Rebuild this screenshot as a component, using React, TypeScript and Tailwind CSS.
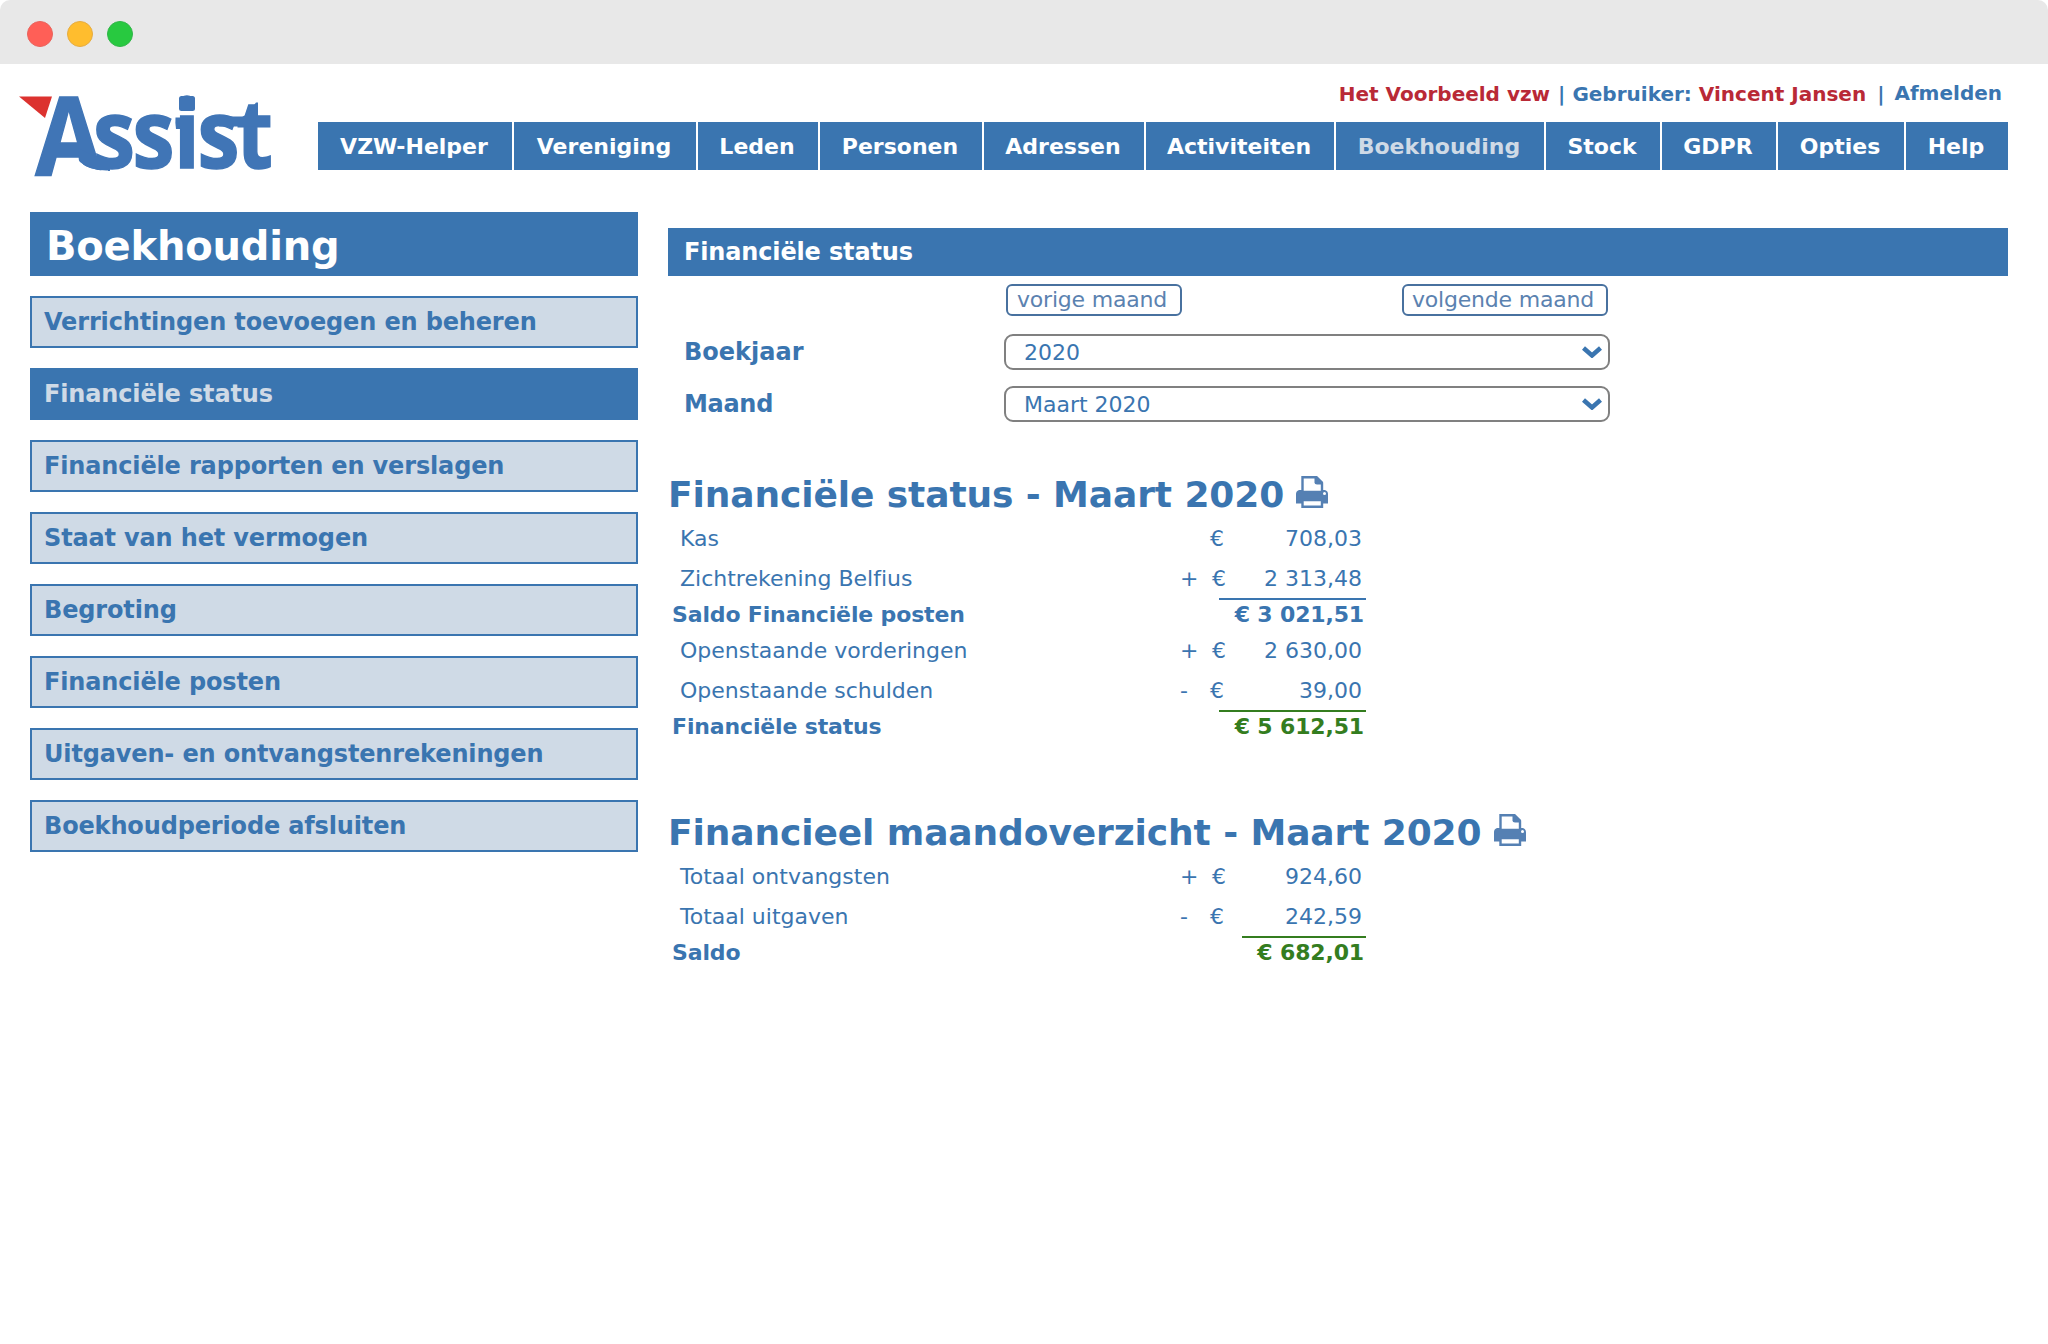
import React from "react";

type MenuItem = { label: string; width: string; active?: boolean };

const menu: MenuItem[] = [
  { label: "VZW-Helper", width: "w-[194px]" },
  { label: "Vereniging", width: "w-[182px]" },
  { label: "Leden", width: "w-[120px]" },
  { label: "Personen", width: "w-[162px]" },
  { label: "Adressen", width: "w-[160px]" },
  { label: "Activiteiten", width: "w-[188px]" },
  { label: "Boekhouding", width: "w-[208px]", active: true },
  { label: "Stock", width: "w-[114px]" },
  { label: "GDPR", width: "w-[114px]" },
  { label: "Opties", width: "w-[126px]" },
  { label: "Help", width: "w-[102px]" },
];

const sideMenu = [
  "Verrichtingen toevoegen en beheren",
  "Financiële status",
  "Financiële rapporten en verslagen",
  "Staat van het vermogen",
  "Begroting",
  "Financiële posten",
  "Uitgaven- en ontvangstenrekeningen",
  "Boekhoudperiode afsluiten",
];

const Logo = () => (
  <svg className="block h-[84px] w-[256px] overflow-visible" viewBox="19 95 256 84" role="img" aria-label="Assist">
    <defs>
      <clipPath id="logo-clip">
        <path d="M19 50H290V200H108V170.500Q90 171 80 162L77 158H62V200H19Z" />
      </clipPath>
    </defs>
    <path d="M19 96.5H52L45 118Z" fill="#dc322f" />
    <g fill="#4075b6" clipPath="url(#logo-clip)">
      <text
        transform="scale(.89 1)"
        fontFamily="'Open Sans'"
        fontWeight={700}
        fontSize="95"
        stroke="#4075b6"
        strokeWidth="1.5"
      >
        <tspan x="39.500" y="176" fontSize="109">A</tspan>
        <tspan x="104.500 149 195.500 221.800 265.500" y="168.500">ssist</tspan>
      </text>
      {/* the leg of the A runs on into the first s */}
      <path d="M78 148L94 156Q102 159 110 159V171Q90 172 79 163Z" />
      {/* square dot and serif of the i, bar joining s and t */}
      <rect x="179" y="96" width="16" height="15" rx="2.500" />
      <path d="M175.500 117.500H186V129H176Q175 123 175.500 117.500Z" />
      <path d="M216 116.500H269.500V126.500H219Z" />
      <path d="M244 118L256 102.500H258V118Z" />
    </g>
  </svg>
);

const PrintIcon = () => (
  <svg className="block h-8 w-8 shrink-0" viewBox="0 0 32 32">
    <path d="M3 14H29Q32 15 32 18V27.500H0V18Q0 15 3 14Z" fill="#5580b3" />
    <path d="M6.500 1.200H20L26 7V16H6.500Z" fill="#fff" stroke="#5580b3" strokeWidth="2.400" />
    <path d="M18.500 0H21L27 6V8.500H21Q18.500 8.500 18.500 6.500Z" fill="#5580b3" />
    <circle cx="28.500" cy="17.500" r="1.500" fill="#fff" />
    <path d="M6.500 24H26V30.800H6.500Z" fill="#fff" stroke="#5580b3" strokeWidth="2.400" />
  </svg>
);

const Select: React.FC<{ value: string }> = ({ value }) => (
  <div className="flex h-9 w-[606px] items-center justify-between rounded-[9px] border-2 border-[#808080] bg-white pl-[18px] pr-[6px] text-[22px]">
    <span>{value}</span>
    <svg className="h-3 w-5" viewBox="0 0 20 12" fill="none" stroke="#3a75b0" strokeWidth="4.500">
      <path d="M1.500 2L10 9.500L18.500 2" />
    </svg>
  </div>
);

const Row: React.FC<{ label: string; sign?: string; amount: string }> = ({ label, sign = "", amount }) => (
  <div className="flex h-10 w-[698px] items-center pl-3 pr-[4px] text-[22px]">
    <span className="w-[500px]">{label}</span>
    <span className={sign === "+" ? "w-[32px]" : "w-[30px]"}>{sign}</span>
    <span>€</span>
    <span className="ml-auto">{amount}</span>
  </div>
);

const Total: React.FC<{ label: string; amount: string; color: string; width: string }> = ({
  label,
  amount,
  color,
  width,
}) => (
  <div className="flex h-8 w-[698px] justify-between pl-1 text-[22px] font-bold leading-[29px] tracking-[-0.15px]">
    <span className="pt-[2px]">{label}</span>
    <span className={`border-t-2 pr-0.5 text-right ${width} ${color}`}>{amount}</span>
  </div>
);

const SectionTitle: React.FC<{ title: string; width: string }> = ({ title, width }) => (
  <div className="flex h-[45px] items-center">
    <h2 className={`whitespace-nowrap text-[36px] font-bold leading-[43px] -mt-0.5 tracking-[-0.1px] ${width}`}>
      {title}
    </h2>
    <div className="-mt-[7px]">
      <PrintIcon />
    </div>
  </div>
);

export default function App() {
  return (
    <div className="h-[1344px] w-[2048px] overflow-hidden bg-white font-['DejaVu_Sans',Verdana,sans-serif] text-[#3a75b0] [font-variant-ligatures:none]">
      <div className="flex h-16 items-center gap-[14px] rounded-t-[10px] bg-[#e8e8e8] pl-[27px] pt-1">
        <span className="size-[26px] rounded-full border border-[#e9635c] bg-[#ff5f57]" />
        <span className="size-[26px] rounded-full border border-[#e6ac40] bg-[#ffbd2e]" />
        <span className="size-[26px] rounded-full border border-[#30b648] bg-[#28c940]" />
      </div>

      {/* Header */}
      <header className="flex h-[148px]">
        <div className="w-[318px] pl-[19px] pt-[31px]">
          <Logo />
        </div>
        <div className="w-[1690px]">
          <div className="flex h-[58px] justify-end whitespace-nowrap pr-[6px] pt-[15px] text-[20px] font-bold leading-[30px]">
            <span className="text-[#b92936]">Het Voorbeeld vzw</span>
            <span className="ml-[8px]">|</span>
            <span className="ml-[7px]">Gebruiker:</span>
            <span className="ml-[7px] text-[#b92936]">Vincent Jansen</span>
            <span className="ml-[11px]">|</span>
            <span className="-mt-px ml-[10px]">Afmelden</span>
          </div>
          <nav className="flex h-12 gap-[2px]">
            {menu.map((item) => (
              <a
                key={item.label}
                className={`flex items-center justify-center bg-[#3a75b0] pr-0.5 text-[22px] font-bold ${item.width} ${
                  item.active ? "text-[#cfdae6]" : "text-white"
                }`}
              >
                {item.label}
              </a>
            ))}
          </nav>
        </div>
      </header>

      <div className="flex pl-[30px]">
        {/* Sidebar */}
        <aside className="w-[608px]">
          <h1 className="flex h-16 items-center bg-[#3a75b0] pl-4 pt-1 text-[40px] font-bold tracking-[-0.2px] text-white">
            Boekhouding
          </h1>
          <ul className="mt-5 flex flex-col gap-5">
            {sideMenu.map((label) => (
              <li
                key={label}
                className={`flex h-[52px] items-center whitespace-nowrap border-2 border-[#3a75b0] pl-3 text-[24px] font-bold tracking-[-0.15px] ${
                  label === "Financiële status" ? "bg-[#3a75b0] text-[#cfdae6]" : "bg-[#cfdae6]"
                }`}
              >
                {label}
              </li>
            ))}
          </ul>
        </aside>

        {/* Content */}
        <main className="ml-[30px] w-[1340px] pt-4">
          <div className="flex h-12 items-center bg-[#3a75b0] pl-4 text-[24px] font-bold tracking-[-0.15px] text-white">
            Financiële status
          </div>
          <div className="ml-[338px] mt-2 flex w-[602px] justify-between text-[22px] tracking-[-0.2px] text-[#5b82b0]">
            <button className="h-8 w-[176px] rounded-[6px] border-2 border-[#48719f] pr-1 leading-[28px]">
              vorige maand
            </button>
            <button className="h-8 w-[206px] rounded-[6px] border-2 border-[#48719f] pr-1 leading-[28px]">
              volgende maand
            </button>
          </div>
          <div className="mt-[18px] flex items-center pl-4">
            <label className="w-[320px] text-[24px] font-bold leading-9">Boekjaar</label>
            <Select value="2020" />
          </div>
          <div className="mt-4 flex items-center pl-4">
            <label className="w-[320px] text-[24px] font-bold leading-9 tracking-[-0.3px]">Maand</label>
            <Select value="Maart 2020" />
          </div>

          <section className="mt-[51px]">
            <SectionTitle title="Financiële status - Maart 2020" width="w-[628px]" />
            <Row label="Kas" amount="708,03" />
            <Row label="Zichtrekening Belfius" sign="+" amount="2 313,48" />
            <Total label="Saldo Financiële posten" amount="€ 3 021,51" color="border-[#3a75b0]" width="w-[147px]" />
            <Row label="Openstaande vorderingen" sign="+" amount="2 630,00" />
            <Row label="Openstaande schulden" sign="-" amount="39,00" />
            <Total
              label="Financiële status"
              amount="€ 5 612,51"
              color="border-[#347d1f] text-[#347d1f]"
              width="w-[147px]"
            />
          </section>

          <section className="mt-[69px]">
            <SectionTitle title="Financieel maandoverzicht - Maart 2020" width="w-[826px]" />
            <Row label="Totaal ontvangsten" sign="+" amount="924,60" />
            <Row label="Totaal uitgaven" sign="-" amount="242,59" />
            <Total
              label="Saldo"
              amount="€ 682,01"
              color="border-[#347d1f] text-[#347d1f]"
              width="w-[124px]"
            />
          </section>
        </main>
      </div>
    </div>
  );
}
